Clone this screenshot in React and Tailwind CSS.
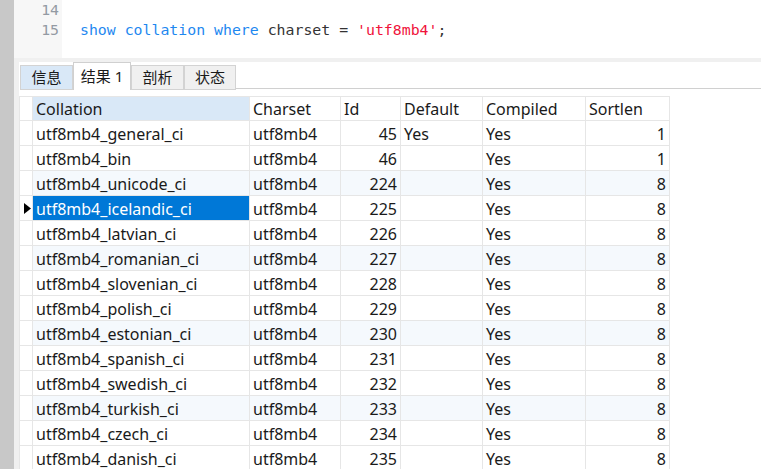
import React from "react";

const rows = [
  ["utf8mb4_general_ci", 45, "Yes", 1],
  ["utf8mb4_bin", 46, "", 1],
  ["utf8mb4_unicode_ci", 224, "", 8],
  ["utf8mb4_icelandic_ci", 225, "", 8],
  ["utf8mb4_latvian_ci", 226, "", 8],
  ["utf8mb4_romanian_ci", 227, "", 8],
  ["utf8mb4_slovenian_ci", 228, "", 8],
  ["utf8mb4_polish_ci", 229, "", 8],
  ["utf8mb4_estonian_ci", 230, "", 8],
  ["utf8mb4_spanish_ci", 231, "", 8],
  ["utf8mb4_swedish_ci", 232, "", 8],
  ["utf8mb4_turkish_ci", 233, "", 8],
  ["utf8mb4_czech_ci", 234, "", 8],
  ["utf8mb4_danish_ci", 235, "", 8],
];

const cell = "h-full flex items-center border-r border-b border-[#e6e6e6] px-[3px] pt-[1px] overflow-hidden whitespace-nowrap";

function Tab({ label, active, tint, w }) {
  if (active) {
    return (
      <div className={`${w} h-[28px] bg-white border border-b-0 border-[#d0d0d0] flex items-center justify-center pb-[1px]`}>
        {label}
      </div>
    );
  }
  return (
    <div
      className={`${w} h-[25px] border border-[#d3d3d3] ${tint ? "bg-[#d9e8f7]" : "bg-[#f0f0f0]"} flex items-center justify-center`}
    >
      {label}
    </div>
  );
}

export default function App() {
  return (
    <div
      className="flex w-[761px] h-[469px] overflow-hidden bg-white text-[15px] text-[#1a1a1a]"
      style={{ fontFamily: '"Noto Sans", "Noto Sans CJK SC", sans-serif' }}
    >
      {/* left bar */}
      <div className="w-[14px] shrink-0 bg-[#c8c8c8]" />

      <div className="flex-1 flex flex-col min-w-0">
        {/* editor */}
        <div
          className="h-[58px] shrink-0 flex text-[14.85px] leading-[20px]"
          style={{ fontFamily: '"DejaVu Sans Mono", "Liberation Mono", monospace' }}
        >
          <div className="w-[48px] bg-[#f7f7f7] text-[#939aa3] text-right pr-[3px]">
            <div>14</div>
            <div>15</div>
          </div>
          <div className="flex-1 pl-[18px] whitespace-pre">
            <div>&nbsp;</div>
            <div>
              <span className="text-[#1e88f0]">show collation where </span>
              <span className="text-[#333333]">charset = </span>
              <span className="text-[#f0143c]">'utf8mb4'</span>
              <span className="text-[#333333]">;</span>
            </div>
          </div>
        </div>
        <div className="h-[4px] shrink-0 bg-[#f0f0f0]" />

        <div className="flex-1 flex min-h-0">
          <div className="w-[5px] shrink-0 bg-[#f0f0f0]" />
          <div className="flex-1 flex flex-col min-w-0">
            {/* tabs */}
            <div className="h-[28px] shrink-0 flex items-end pl-[1px]">
              <div className="flex items-end">
                <Tab label="信息" tint w="w-[53px]" />
                <Tab label="结果 1" active w="w-[58px]" />
                <Tab label="剖析" w="w-[53px]" />
                <Tab label="状态" w="w-[52px]" />
              </div>
              <div className="flex-1 h-[1px] bg-[#d0d0d0] mb-[1px]" />
            </div>

            {/* grid */}
            <div className="mt-[6px] flex flex-col text-[16px]">
              <div className="flex h-[25px] shrink-0 border-t border-[#e6e6e6] w-[651px]">
                <div className={`${cell} w-[14px] border-l`} />
                <div className={`${cell} w-[217px] bg-[#d9e8f7]`}>Collation</div>
                <div className={`${cell} w-[91px]`}>Charset</div>
                <div className={`${cell} w-[60px]`}>Id</div>
                <div className={`${cell} w-[82px]`}>Default</div>
                <div className={`${cell} w-[103px]`}>Compiled</div>
                <div className={`${cell} w-[84px]`}>Sortlen</div>
              </div>
              {rows.map(([name, id, def, len], i) => {
                const sel = i === 3;
                const bg = i % 3 === 2 ? "bg-[#f5f9fd]" : "bg-white";
                return (
                  <div key={name} className={`flex h-[25px] shrink-0 w-[651px] ${bg}`}>
                    <div className="h-full w-[14px] shrink-0 flex items-center border-l border-r border-b border-[#e6e6e6] bg-white pl-[4px]">
                      {sel && (
                        <svg width="7" height="11" viewBox="0 0 7 11" className="shrink-0">
                          <path d="M0 0 L7 5.5 L0 11 Z" fill="#000" />
                        </svg>
                      )}
                    </div>
                    <div className={`${cell} w-[217px] ${sel ? "bg-[#0078d7] text-white" : ""}`}>{name}</div>
                    <div className={`${cell} w-[91px]`}>utf8mb4</div>
                    <div className={`${cell} w-[60px] justify-end`}>{id}</div>
                    <div className={`${cell} w-[82px]`}>{def}</div>
                    <div className={`${cell} w-[103px]`}>Yes</div>
                    <div className={`${cell} w-[84px] justify-end`}>{len}</div>
                  </div>
                );
              })}
            </div>
          </div>
        </div>
      </div>
    </div>
  );
}
